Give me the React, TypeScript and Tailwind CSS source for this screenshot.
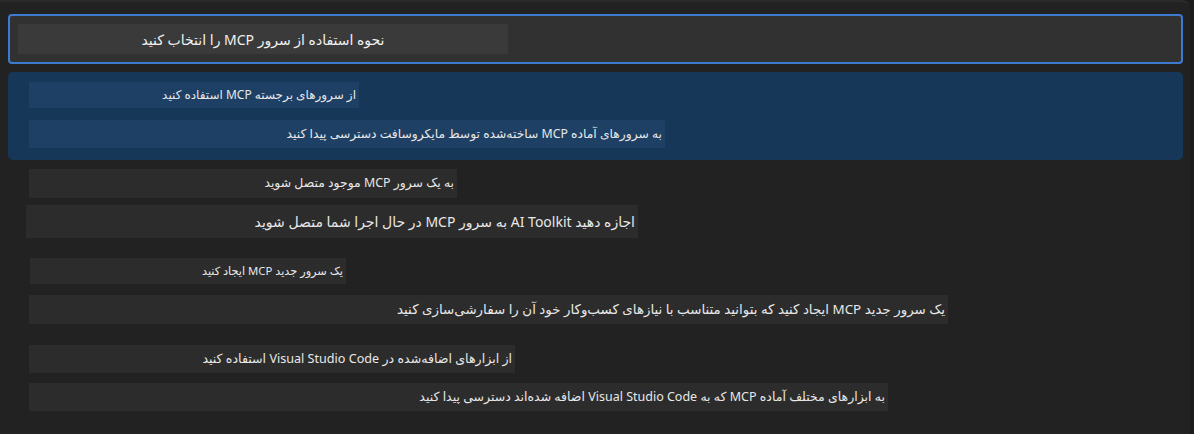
import React from "react";

type Item = {
  label: string;
  labelBox: string;
  desc: string;
  descBox: string;
};

const FONT = { fontFamily: '"Noto Sans", "DejaVu Sans", sans-serif' };

const items: Item[] = [
  {
    label: "به یک سرور MCP موجود متصل شوید",
    labelBox: "ml-[21px] mt-[9px] h-[29px] w-[428px] text-[12.4px]",
    desc: "اجازه دهید AI Toolkit به سرور MCP در حال اجرا شما متصل شوید",
    descBox: "ml-[18px] mt-[7px] h-[33px] w-[612px] text-[14px]",
  },
  {
    label: "یک سرور جدید MCP ایجاد کنید",
    labelBox: "ml-[22px] mt-[20px] h-[26px] w-[316px] text-[11.3px]",
    desc: "یک سرور جدید MCP ایجاد کنید که بتوانید متناسب با نیازهای کسب‌وکار خود آن را سفارشی‌سازی کنید",
    descBox: "ml-[21px] mt-[11px] h-[29px] w-[919px] text-[13.4px]",
  },
  {
    label: "از ابزارهای اضافه‌شده در Visual Studio Code استفاده کنید",
    labelBox: "ml-[21px] mt-[21px] h-[28px] w-[486px] text-[12.6px]",
    desc: "به ابزارهای مختلف آماده MCP که به Visual Studio Code اضافه شده‌اند دسترسی پیدا کنید",
    descBox: "ml-[21px] mt-[10px] h-[28px] w-[859px] text-[12.5px]",
  },
];

function Box({ text, cls, tone }: { text: string; cls: string; tone: string }) {
  return (
    <div
      dir="rtl"
      className={`flex items-center justify-start overflow-hidden whitespace-nowrap pr-[3px] text-[#e8e8e8] ${tone} ${cls}`}
    >
      {text}
    </div>
  );
}

export default function App() {
  return (
    <div className="h-[434px] w-[1194px] overflow-hidden bg-[#1c1c1c]" style={FONT}>
      <div className="h-full w-[1190px] rounded-tr-[8px] border-t-2 border-[#2b2b2b] bg-[#222222] px-2 pt-[12px]">
        {/* Input */}
        <div className="h-[50px] w-[1175px] rounded-[4px] border-2 border-[#3c7bd0] bg-[#313131] pl-[8px] pt-[8px]">
          <div
            dir="rtl"
            className="flex h-[30px] w-[490px] items-center justify-center whitespace-nowrap bg-[#3a3a3a] text-[14px] text-[#f0f0f0]"
          >
            نحوه استفاده از سرور MCP را انتخاب کنید
          </div>
        </div>

        {/* Selected */}
        <div className="mt-[8px] flex h-[88px] w-[1175px] flex-col rounded-[5px] bg-[#163758] pt-[10px]">
          <Box
            text="از سرورهای برجسته MCP استفاده کنید"
            cls="ml-[21px] h-[26px] w-[330px] text-[12px]"
            tone="bg-[#1e4064]"
          />
          <Box
            text="به سرورهای آماده MCP ساخته‌شده توسط مایکروسافت دسترسی پیدا کنید"
            cls="ml-[21px] mt-[12px] h-[28px] w-[636px] text-[12.3px]"
            tone="bg-[#1e4064]"
          />
        </div>

        {items.map((it) => (
          <div key={it.label} className="flex flex-col">
            <Box text={it.label} cls={it.labelBox} tone="bg-[#2c2c2c]" />
            <Box text={it.desc} cls={it.descBox} tone="bg-[#2c2c2c]" />
          </div>
        ))}
      </div>
    </div>
  );
}
